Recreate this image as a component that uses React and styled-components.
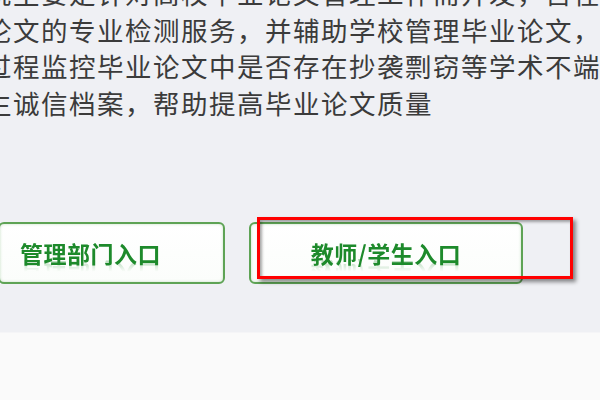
import styled, { createGlobalStyle } from 'styled-components';

const GlobalStyle = createGlobalStyle`
  html, body {
    margin: 0;
    padding: 0;
    background: #fafafa;
  }
  body {
    font-family: "Noto Sans CJK SC", "Noto Sans", sans-serif;
  }
`;

const lines = [
  '统主要是针对高校毕业论文管理工作而开发，旨在提供，',
  '论文的专业检测服务，并辅助学校管理毕业论文，',
  '过程监控毕业论文中是否存在抄袭剽窃等学术不端',
  '生诚信档案，帮助提高毕业论文质量',
];

const entries = [
  { label: '管理部门入口', width: 227, pad: 20, center: false },
  { label: '教师/学生入口', width: 274, pad: 0, center: true },
];

const App = () => {
  return (
    <Page>
      <GlobalStyle />
      <Intro>
        <Description>
          {lines.map((line, i) => (
            <Line key={i}>{line}</Line>
          ))}
        </Description>
        <EntryRow>
          {entries.map(entry => (
            <EntryButton key={entry.label} $width={entry.width} $pad={entry.pad} $center={entry.center}>
              <EntryLabel>{entry.label}</EntryLabel>
            </EntryButton>
          ))}
          <Highlight />
        </EntryRow>
      </Intro>
      <Footer />
    </Page>
  );
};

export default App;

const Page = styled.div`
  width: 600px;
  height: 400px;
  overflow: hidden;
  display: flex;
  flex-direction: column;
`;

const Intro = styled.div`
  height: 332px;
  background: #eff0f4;
  overflow: hidden;
`;

const Description = styled.div`
  margin: -25px 0 0 -15px;
  color: #3b3b3b;
  font-size: 26.5px;
  line-height: 36.5px;
  white-space: nowrap;
`;

const Line = styled.div`
  letter-spacing: 1.5px;
`;

const EntryRow = styled.div`
  position: relative;
  display: flex;
  gap: 24px;
  margin: 101px 0 0 -2px;
`;

const EntryButton = styled.div`
  box-sizing: border-box;
  width: ${p => p.$width}px;
  height: 62px;
  border: 2px solid #5ea355;
  border-radius: 6px;
  background: linear-gradient(#ffffff, #fbfdfb);
  box-shadow: inset 0 0 3px rgba(94, 163, 85, 0.35);
  display: flex;
  align-items: center;
  justify-content: ${p => (p.$center ? 'center' : 'flex-start')};
  padding-left: ${p => p.$pad}px;
`;

const EntryLabel = styled.span`
  color: #1d8a2b;
  font-size: 23px;
  font-weight: 700;
  letter-spacing: 0.5px;
  line-height: 28px;
  -webkit-box-reflect: below -8px linear-gradient(transparent 55%, rgba(255, 255, 255, 0.35));
`;

const Highlight = styled.div`
  position: absolute;
  left: 259px;
  top: -5px;
  width: 316px;
  height: 62px;
  box-sizing: border-box;
  border: 3.5px solid #ff0000;
  box-shadow: 3px 3px 4px rgba(0, 0, 0, 0.45), inset 2px 2px 3px rgba(0, 0, 0, 0.35);
`;

const Footer = styled.div`
  flex: 1;
  background: #fafafa;
  border-top: 1px solid #f5f5f7;
`;
